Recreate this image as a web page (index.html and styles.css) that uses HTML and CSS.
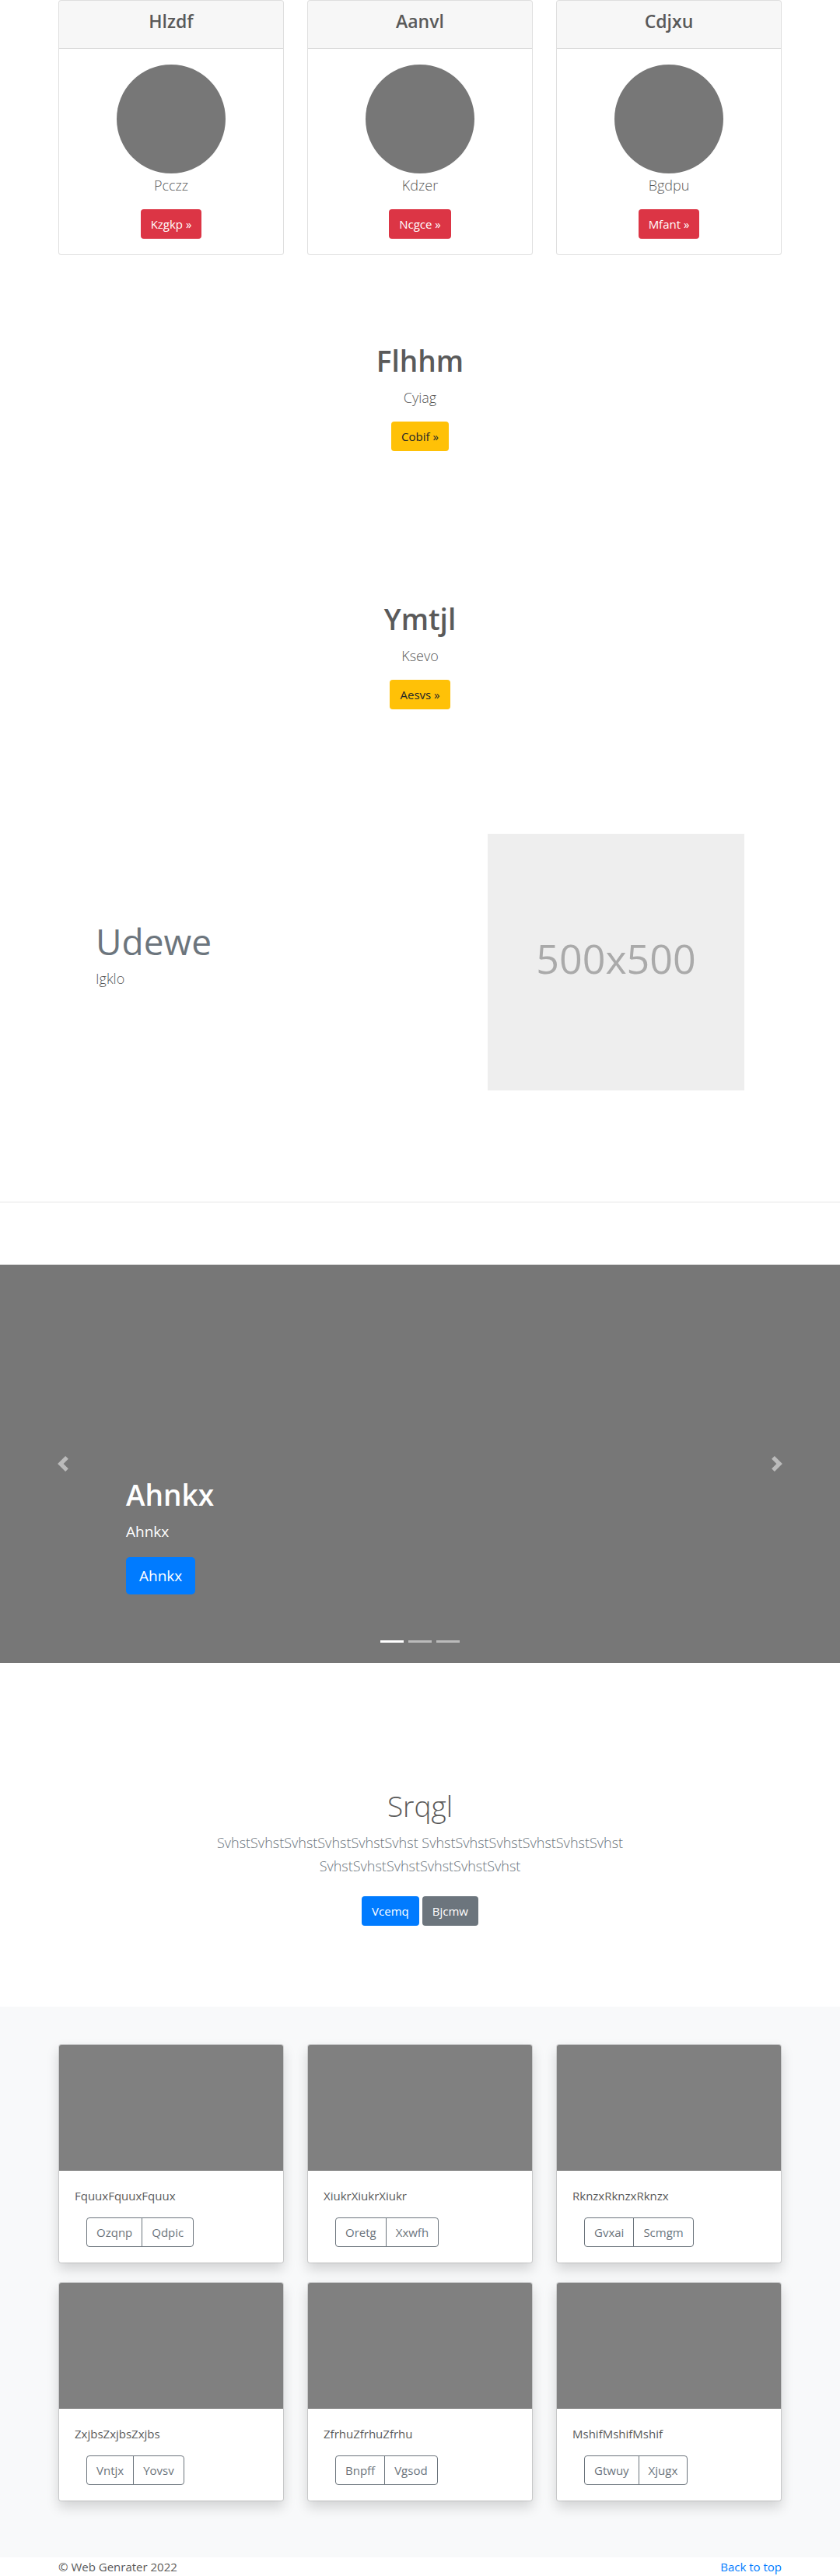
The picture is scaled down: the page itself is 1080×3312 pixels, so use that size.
FILE: index.html
```html
<!DOCTYPE html>
<html lang="en">
<head>
<meta charset="utf-8">
<meta name="viewport" content="width=device-width, initial-scale=1">
<title>Web Genrater</title>
<link rel="stylesheet" href="styles.css">
</head>
<body>
<main>
  <section class="container card-grid">
    <article class="card">
      <h2 class="card-header">Hlzdf</h2>
      <div class="card-body centered">
        <div class="avatar"></div>
        <p class="lead">Pcczz</p>
        <a class="btn btn-danger" href="#">Kzgkp »</a>
      </div>
    </article>
    <article class="card">
      <h2 class="card-header">Aanvl</h2>
      <div class="card-body centered">
        <div class="avatar"></div>
        <p class="lead">Kdzer</p>
        <a class="btn btn-danger" href="#">Ncgce »</a>
      </div>
    </article>
    <article class="card">
      <h2 class="card-header">Cdjxu</h2>
      <div class="card-body centered">
        <div class="avatar"></div>
        <p class="lead">Bgdpu</p>
        <a class="btn btn-danger" href="#">Mfant »</a>
      </div>
    </article>
  </section>

  <section class="promo centered">
    <h2 class="title">Flhhm</h2>
    <p class="lead">Cyiag</p>
    <a class="btn btn-warning" href="#">Cobif »</a>
  </section>
  <section class="promo centered">
    <h2 class="title">Ymtjl</h2>
    <p class="lead">Ksevo</p>
    <a class="btn btn-warning" href="#">Aesvs »</a>
  </section>

  <section class="container feature">
    <div>
      <h2 class="feature-title">Udewe</h2>
      <p class="lead">Igklo</p>
    </div>
    <div class="placeholder">500x500</div>
  </section>

  <hr class="divider">

  <section class="carousel">
    <div class="caption">
      <h2 class="title">Ahnkx</h2>
      <p class="caption-text">Ahnkx</p>
      <a class="btn btn-lg btn-primary" href="#">Ahnkx</a>
    </div>
    <button class="control control-prev" type="button" aria-label="Previous">
      <svg width="20" height="20" viewBox="0 0 8 8" fill="#fff"><path d="M5.25 0l-4 4 4 4 1.5-1.5L4.25 4l2.5-2.5L5.25 0z"/></svg>
    </button>
    <button class="control control-next" type="button" aria-label="Next">
      <svg width="20" height="20" viewBox="0 0 8 8" fill="#fff"><path d="M2.75 0l-1.5 1.5L3.75 4l-2.5 2.5L2.75 8l4-4-4-4z"/></svg>
    </button>
    <div class="indicators">
      <button class="indicator active" type="button" aria-label="Slide 1"></button>
      <button class="indicator" type="button" aria-label="Slide 2"></button>
      <button class="indicator" type="button" aria-label="Slide 3"></button>
    </div>
  </section>

  <section class="intro centered">
    <h2 class="title title-light">Srqgl</h2>
    <p class="lead muted">SvhstSvhstSvhstSvhstSvhstSvhst SvhstSvhstSvhstSvhstSvhstSvhst SvhstSvhstSvhstSvhstSvhstSvhst</p>
    <div class="actions">
      <a class="btn btn-primary" href="#">Vcemq</a>
      <a class="btn btn-secondary" href="#">Bjcmw</a>
    </div>
  </section>

  <section class="album">
    <div class="container card-grid">
      <article class="card raised">
        <div class="thumb"></div>
        <div class="card-body">
          <p class="card-text">FquuxFquuxFquux</p>
          <div class="btn-group"><button class="btn btn-outline" type="button">Ozqnp</button><button class="btn btn-outline" type="button">Qdpic</button></div>
        </div>
      </article>
      <article class="card raised">
        <div class="thumb"></div>
        <div class="card-body">
          <p class="card-text">XiukrXiukrXiukr</p>
          <div class="btn-group"><button class="btn btn-outline" type="button">Oretg</button><button class="btn btn-outline" type="button">Xxwfh</button></div>
        </div>
      </article>
      <article class="card raised">
        <div class="thumb"></div>
        <div class="card-body">
          <p class="card-text">RknzxRknzxRknzx</p>
          <div class="btn-group"><button class="btn btn-outline" type="button">Gvxai</button><button class="btn btn-outline" type="button">Scmgm</button></div>
        </div>
      </article>
      <article class="card raised">
        <div class="thumb"></div>
        <div class="card-body">
          <p class="card-text">ZxjbsZxjbsZxjbs</p>
          <div class="btn-group"><button class="btn btn-outline" type="button">Vntjx</button><button class="btn btn-outline" type="button">Yovsv</button></div>
        </div>
      </article>
      <article class="card raised">
        <div class="thumb"></div>
        <div class="card-body">
          <p class="card-text">ZfrhuZfrhuZfrhu</p>
          <div class="btn-group"><button class="btn btn-outline" type="button">Bnpff</button><button class="btn btn-outline" type="button">Vgsod</button></div>
        </div>
      </article>
      <article class="card raised">
        <div class="thumb"></div>
        <div class="card-body">
          <p class="card-text">MshifMshifMshif</p>
          <div class="btn-group"><button class="btn btn-outline" type="button">Gtwuy</button><button class="btn btn-outline" type="button">Xjugx</button></div>
        </div>
      </article>
    </div>
  </section>
</main>
<footer class="container footer">
  <span>© Web Genrater 2022</span>
  <a href="#">Back to top</a>
</footer>
</body>
</html>
```
FILE: styles.css
```css
* {
  box-sizing: border-box;
}

body {
  margin: 0;
  background: #fff;
  color: #5a5a5a;
  font-family: "Segoe UI", "Open Sans", "Noto Sans", sans-serif;
  font-size: 15px;
  line-height: 24px;
}

h2,
p {
  margin: 0;
}

.container {
  width: 100%;
  max-width: 960px;
  margin: 0 auto;
  padding: 0 15px;
}

.centered {
  display: flex;
  flex-direction: column;
  align-items: center;
  text-align: center;
}

.card-grid {
  display: grid;
  grid-template-columns: repeat(3, minmax(0, 1fr));
  gap: 24px 30px;
}

/* Text */

.title {
  margin-bottom: 8px;
  font-size: 37px;
  font-weight: 600;
  line-height: 48px;
}

.title-light {
  font-weight: 300;
}

.lead {
  margin-bottom: 16px;
  font-size: 18px;
  font-weight: 300;
  line-height: 30px;
}

.muted {
  color: #6c757d;
}

/* Buttons */

.btn {
  display: inline-block;
  padding: 6px 12px;
  border: 1px solid transparent;
  border-radius: 4px;
  font-family: inherit;
  font-size: 15px;
  line-height: 24px;
  text-decoration: none;
  cursor: pointer;
}

.btn-danger {
  background: #dc3545;
  color: #fff;
}

.btn-warning {
  background: #ffc107;
  color: #212529;
}

.btn-primary {
  background: #007bff;
  color: #fff;
}

.btn-secondary {
  background: #6c757d;
  color: #fff;
}

.btn-lg {
  padding: 8px 16px;
  border-radius: 5px;
  font-size: 19px;
  line-height: 30px;
}

.btn-outline {
  border-color: #6c757d;
  background: transparent;
  color: #6c757d;
}

.btn-group {
  display: flex;
  margin-left: 15px;
}

.btn-group .btn:first-child {
  border-radius: 4px 0 0 4px;
}

.btn-group .btn:last-child {
  margin-left: -1px;
  border-radius: 0 4px 4px 0;
}

/* Cards */

.card {
  overflow: hidden;
  border: 1px solid rgba(0, 0, 0, 0.125);
  border-radius: 4px;
  background: #fff;
  background-clip: padding-box;
}

.card-header {
  padding: 12px 20px 20px;
  border-bottom: 1px solid rgba(0, 0, 0, 0.125);
  background: rgba(0, 0, 0, 0.03);
  font-size: 23px;
  font-weight: 600;
  line-height: 29px;
  text-align: center;
}

.card-body {
  padding: 20px;
}

.card-text {
  margin-bottom: 16px;
}

.raised {
  box-shadow: 0 8px 16px rgba(0, 0, 0, 0.15);
}

.avatar {
  width: 140px;
  height: 140px;
  border-radius: 50%;
  background: #777;
}

.thumb {
  height: 162px;
  background: #808080;
}

/* Promo blocks */

.promo {
  padding: 112px 15px 80px;
}

.promo + .promo {
  padding-bottom: 160px;
}

/* Feature row */

.feature {
  display: flex;
  align-items: center;
  justify-content: space-between;
  padding: 0 63px;
}

.feature-title {
  margin-bottom: 8px;
  color: #6c757d;
  font-size: 46px;
  font-weight: 400;
  line-height: 50px;
}

.placeholder {
  display: flex;
  align-items: center;
  justify-content: center;
  width: 330px;
  aspect-ratio: 1;
  padding-bottom: 10px;
  background: #eee;
  color: #aaa;
  font-size: 52px;
}

.divider {
  margin: 143px 0 80px;
  border: 0;
  border-top: 1px solid rgba(0, 0, 0, 0.1);
}

/* Carousel */

.carousel {
  position: relative;
  display: flex;
  align-items: flex-end;
  min-height: 512px;
  padding: 0 15% 88px;
  background: #777;
  color: #fff;
}

.caption-text {
  margin-bottom: 18px;
  font-size: 19px;
  line-height: 30px;
}

.control {
  position: absolute;
  top: 0;
  bottom: 0;
  display: flex;
  align-items: center;
  justify-content: center;
  width: 15%;
  padding: 0;
  border: 0;
  background: none;
  opacity: 0.5;
  cursor: pointer;
}

.control-prev {
  left: 0;
}

.control-next {
  right: 0;
}

.indicators {
  position: absolute;
  right: 0;
  bottom: 26px;
  left: 0;
  display: flex;
  justify-content: center;
  gap: 6px;
}

.indicator {
  width: 30px;
  height: 3px;
  padding: 0;
  border: 0;
  background: #fff;
  opacity: 0.5;
  cursor: pointer;
}

.indicator.active {
  opacity: 1;
}

/* Intro */

.intro {
  padding: 160px 15px 104px;
}

.intro .lead {
  max-width: 580px;
  margin-bottom: 24px;
}

.actions {
  display: flex;
  gap: 4px;
}

/* Album */

.album {
  padding: 48px 0 72px;
  background: #f8f9fa;
}

/* Footer */

.footer {
  display: flex;
  justify-content: space-between;
}

.footer a {
  color: #007bff;
  text-decoration: none;
}
```
